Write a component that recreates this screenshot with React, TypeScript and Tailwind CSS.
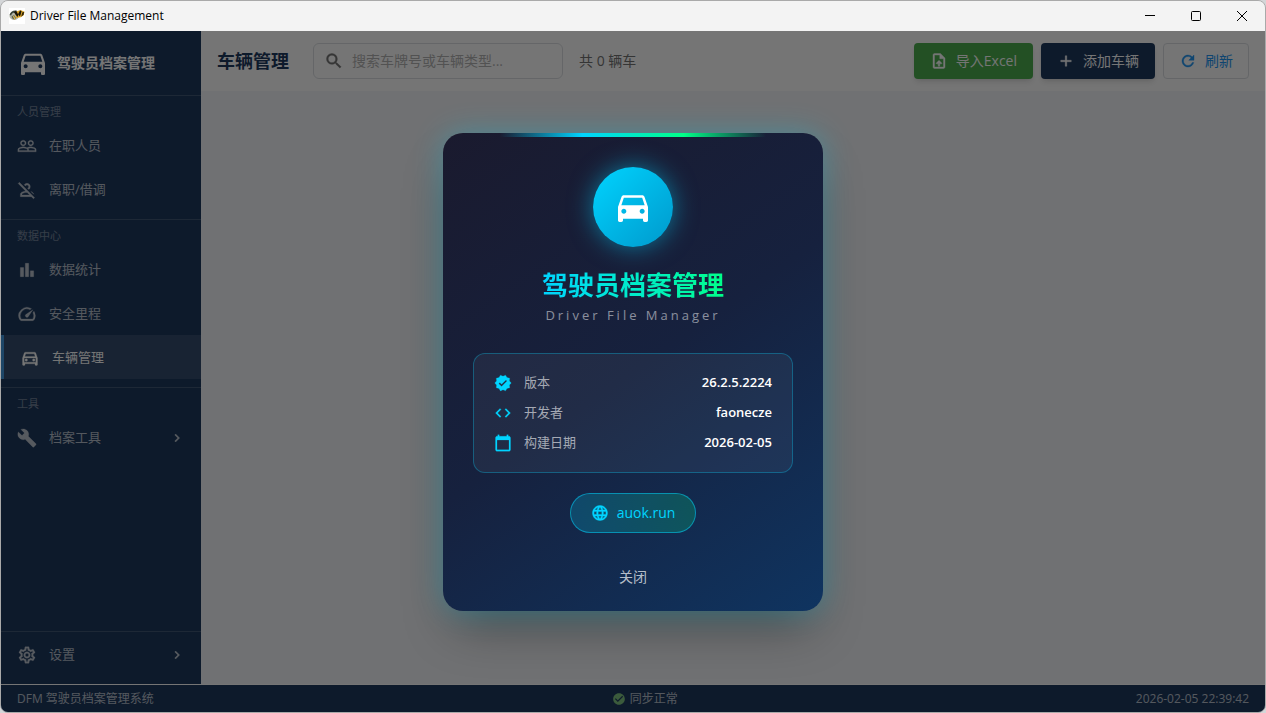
import React from "react";
import type { IconType } from "react-icons";
import {
  MdAdd,
  MdBarChart,
  MdBuild,
  MdCalendarToday,
  MdCheckCircle,
  MdChevronRight,
  MdCode,
  MdDirectionsCar,
  MdLanguage,
  MdOutlineDirectionsCar,
  MdOutlinePersonOff,
  MdOutlineSettings,
  MdOutlineUploadFile,
  MdPeopleOutline,
  MdRefresh,
  MdSearch,
  MdSpeed,
  MdVerified,
} from "react-icons/md";

// The Material icons carry an unfilled bounding box path, which must stay
// invisible when an icon is given a stroke.
const App = () => {
  const [aboutIsOpen, setAboutIsOpen] = React.useState(true);

  return (
    <div className="min-h-screen bg-[#d4d6d8] font-['Open_Sans','Noto_Sans_CJK_SC',sans-serif] [&_path[fill=none]]:stroke-none">
      <div className="flex min-h-screen flex-col overflow-hidden rounded-lg border border-[#a9a9a9]">
        <TitleBar />

        <div className="relative flex flex-1 flex-col">
          <div className="flex flex-1">
            <Sidebar openAbout={() => setAboutIsOpen(true)} />
            <VehiclesPage />
          </div>
          <StatusBar />

          {aboutIsOpen ? (
            <AboutDialog onClose={() => setAboutIsOpen(false)} />
          ) : null}
        </div>
      </div>
    </div>
  );
};

export default App;

const TitleBar = () => (
  <div className="flex h-[30px] items-center justify-between bg-[#f3f3f3] pl-2 text-black">
    <div className="flex items-center gap-[5px]">
      <AppLogo />
      <span className="text-xs">Driver File Management</span>
    </div>

    <div className="flex">
      <button
        className="grid h-[30px] w-[46px] place-items-center"
        type="button"
        aria-label="Minimize"
      >
        <svg width="10" height="10" viewBox="0 0 10 10" stroke="currentColor">
          <path d="M0 4.5h10" />
        </svg>
      </button>
      <button
        className="grid h-[30px] w-[46px] place-items-center"
        type="button"
        aria-label="Maximize"
      >
        <svg
          width="10"
          height="10"
          viewBox="0 0 10 10"
          fill="none"
          stroke="currentColor"
        >
          <rect x="0.5" y="0.5" width="9" height="9" rx="1" />
        </svg>
      </button>
      <button
        className="grid h-[30px] w-[46px] place-items-center"
        type="button"
        aria-label="Close window"
      >
        <svg width="10" height="10" viewBox="0 0 10 10" stroke="currentColor">
          <path d="M0 0l10 10M10 0L0 10" />
        </svg>
      </button>
    </div>
  </div>
);

const AppLogo = () => (
  <svg width="16" height="16" viewBox="0 0 16 16">
    <rect width="16" height="16" fill="#fff" />
    <ellipse cx="5.2" cy="7.8" rx="4.8" ry="4.3" fill="#b4b6a8" />
    <path d="M.6 7C1.200 4 4 2 7.500 2.500L6.500 4.600C4.200 4.400 2.600 5.400 2.200 7.600z" fill="#39443a" />
    <path d="M2.500 8.500l2.500-1.500L7 10l-1.200 1.600C4.200 11.400 2.900 10.400 2.500 8.500z" fill="#5f6455" />
    <path d="M6 4l5.500-1.900 4 1.700-.8 3.400-3 2L7 10z" fill="#dda628" />
    <path d="M5 4.200l2.200-1.600L9 6.300 11 2.600l1.600.3-1.200 4.500-1.200.8-.4-2L8.500 9 6.800 7z" fill="#1a1508" />
    <path d="M13.200 4.600l2-.8-.6 3-2.400 2z" fill="#332708" />
    <path d="M4.800 7.500l1.700 3.800-1 .5L4 8.200z" fill="#e8c04a" />
  </svg>
);

const Sidebar = ({ openAbout }: { openAbout: () => void }) => (
  <aside className="flex w-[200px] shrink-0 flex-col bg-[#1e3a5f] text-white">
    <div className="flex h-16 items-center gap-2 px-4">
      <MdDirectionsCar size={32} />
      <h1 className="text-sm font-bold">驾驶员档案管理</h1>
    </div>

    <nav className="flex flex-1 flex-col">
      <NavSection title="人员管理">
        <NavItem icon={MdPeopleOutline} label="在职人员" />
        <NavItem icon={MdOutlinePersonOff} label="离职/借调" />
      </NavSection>
      <NavSection title="数据中心">
        <NavItem icon={MdBarChart} label="数据统计" />
        <NavItem icon={MdSpeed} label="安全里程" />
        <NavItem icon={MdOutlineDirectionsCar} label="车辆管理" isActive />
      </NavSection>
      <NavSection title="工具">
        <NavItem icon={MdBuild} label="档案工具" hasMenu />
      </NavSection>

      <div className="mt-auto border-t border-white/15 pb-2">
        <NavItem
          icon={MdOutlineSettings}
          label="设置"
          hasMenu
          onClick={openAbout}
        />
      </div>
    </nav>
  </aside>
);

const NavSection = ({
  title,
  children,
}: {
  title: string;
  children: React.ReactNode;
}) => (
  <div className="border-t border-white/15 pb-2">
    <p className="px-4 pt-2 pb-[3px] text-[11px] leading-4 text-white/40">
      {title}
    </p>
    {children}
  </div>
);

const NavItem = ({
  icon: Icon,
  label,
  isActive = false,
  hasMenu = false,
  onClick,
}: {
  icon: IconType;
  label: string;
  isActive?: boolean;
  hasMenu?: boolean;
  onClick?: () => void;
}) => (
  <button
    className={`flex h-11 w-full items-center gap-3 px-4 pt-0.5 text-[13px] ${
      isActive
        ? "border-l-3 border-[#4299e1] bg-white/10 text-white"
        : "text-white/70"
    }`}
    type="button"
    onClick={onClick}
  >
    <Icon className="stroke-[0.3]" size={20} />
    <span>{label}</span>
    {hasMenu ? (
      <MdChevronRight className="ml-auto stroke-[0.5]" size={16} />
    ) : null}
  </button>
);

const VehiclesPage = () => (
  <main className="min-w-0 flex-1 bg-[#f5f7fa]">
    <header className="flex h-[60px] items-center bg-white px-4">
      <h2 className="text-lg font-bold text-[#1e3a5f]">车辆管理</h2>

      <label className="ml-6 flex h-9 w-[250px] items-center gap-2 rounded-md border border-[#dcdfe3] px-2.5">
        <MdSearch className="shrink-0 stroke-[0.5] text-[#757575]" size={20} />
        <input
          className="w-full min-w-0 text-sm outline-none placeholder:text-[#b3b3b3]"
          type="search"
          aria-label="搜索车辆"
          placeholder="搜索车牌号或车辆类型..."
        />
      </label>

      <p className="ml-4 text-sm text-[#757575]">共 0 辆车</p>

      <div className="ml-auto flex gap-2 text-sm">
        <button
          className="flex h-9 items-center gap-2 rounded-sm bg-[#4caf50] px-4 text-white shadow-md"
          type="button"
        >
          <MdOutlineUploadFile className="stroke-[0.5]" size={18} />
          导入Excel
        </button>
        <button
          className="flex h-9 items-center gap-2 rounded-sm bg-[#1e3a5f] px-4 text-white shadow-md"
          type="button"
        >
          <MdAdd className="stroke-[0.5]" size={18} />
          添加车辆
        </button>
        <button
          className="flex h-9 items-center gap-2 rounded-sm border border-[#dcdfe3] px-[15px] text-[#2196f3]"
          type="button"
        >
          <MdRefresh className="stroke-[0.5]" size={18} />
          刷新
        </button>
      </div>
    </header>
  </main>
);

const StatusBar = () => (
  <footer className="flex h-7 items-center justify-between border-t border-white bg-[#1e3a5f] px-4 text-xs text-white/70">
    <span>DFM 驾驶员档案管理系统</span>
    <span className="flex items-center gap-1">
      <MdCheckCircle className="text-[#81c784]" size={14} />
      同步正常
    </span>
    <span>2026-02-05 22:39:42</span>
  </footer>
);

const AboutDialog = ({ onClose }: { onClose: () => void }) => (
  <div className="absolute inset-0 z-10 grid place-items-center bg-black/54">
    <div
      className="relative flex w-[380px] flex-col items-center rounded-[20px] bg-[linear-gradient(145deg,#1a1a2e_0%,#16213e_50%,#0f3460_100%)] px-[30px] pt-[34px] pb-4 shadow-[0_0_30px_rgba(0,212,255,0.3),0_25px_50px_-12px_rgba(0,0,0,0.4)]"
      role="dialog"
      aria-modal="true"
      aria-labelledby="about-title"
    >
      <div className="absolute inset-x-[15%] top-0 h-1 bg-[linear-gradient(90deg,transparent,#00d4ff_31%,#00ff88_69%,transparent)]" />

      <div className="grid size-20 place-items-center rounded-full bg-linear-135 from-[#00d4ff] to-[#0099cc] text-white shadow-[0_0_24px_rgba(0,212,255,0.5)]">
        <MdDirectionsCar size={40} />
      </div>

      <h2
        className="mt-5 bg-linear-90 from-[#00d4ff] to-[#00ff88] bg-clip-text text-[26px] leading-9 font-bold text-transparent"
        id="about-title"
      >
        驾驶员档案管理
      </h2>
      <p className="text-[13px] leading-6 tracking-[3px] text-white/50">
        Driver File Manager
      </p>

      <dl className="mt-[26px] w-full rounded-xl border border-[#00d4ff]/30 bg-white/5 px-5 py-[14px] text-[13px]">
        <InfoRow icon={MdVerified} label="版本" value="26.2.5.2224" />
        <InfoRow icon={MdCode} label="开发者" value="faonecze" />
        <InfoRow icon={MdCalendarToday} label="构建日期" value="2026-02-05" />
      </dl>

      <a
        className="mt-5 flex h-10 items-center gap-2 rounded-full border border-[#00d4ff]/50 bg-linear-90 from-[#00d4ff]/20 to-[#00ff88]/20 px-5 text-sm text-[#00d4ff]"
        href="https://auok.run"
      >
        <MdLanguage className="stroke-[0.5]" size={18} />
        auok.run
      </a>

      <button
        className="mt-[26px] h-9 px-4 text-sm text-white/70"
        type="button"
        onClick={onClose}
      >
        关闭
      </button>
    </div>
  </div>
);

const InfoRow = ({
  icon: Icon,
  label,
  value,
}: {
  icon: IconType;
  label: string;
  value: string;
}) => (
  <div className="flex h-[30px] items-center gap-3">
    <Icon className="stroke-[0.3] text-[#00d4ff]" size={18} />
    <dt className="text-white/60">{label}</dt>
    <dd className="ml-auto font-semibold text-white">{value}</dd>
  </div>
);
